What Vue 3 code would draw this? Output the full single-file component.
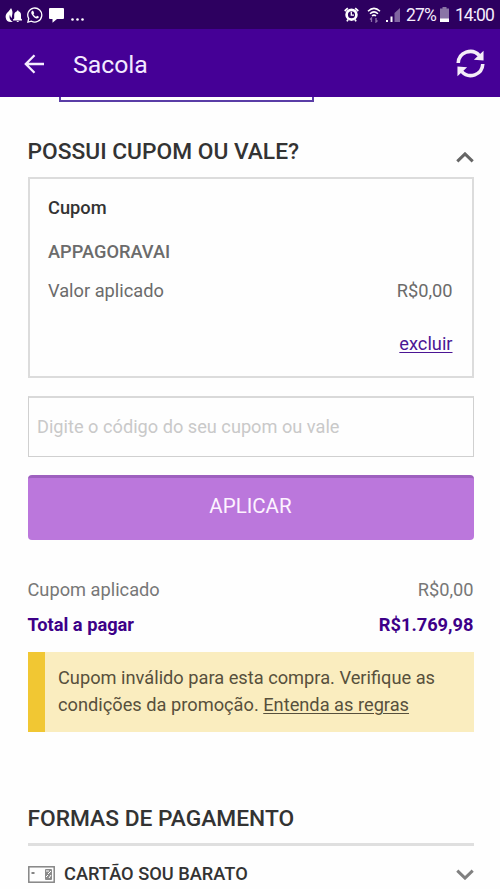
<script setup>
const summary = [
  { label: 'Cupom aplicado', value: 'R$0,00', total: false },
  { label: 'Total a pagar', value: 'R$1.769,98', total: true },
]
</script>

<template>
  <div class="screen">
    <div class="status">
      <svg class="ic-notify" viewBox="0 0 17 16" fill="#fff">
        <path d="M6 1C5 4 0 6 .7 10.500C1 13.500 3 15 6 15H8C4.500 13 4 10 5 7.500C5 9.500 6 10.500 7 11C6.500 8 9 6 6 1Z" />
        <path d="M8 13.500V12.500L9.200 11.500V8C9.200 5.800 10.500 4.700 12 4.300C12 3 13.500 3 13.500 4.300C15 4.700 16 6 16 8V11.500L17 12.500V13.500ZM11.500 14H14C13.700 15.400 11.800 15.400 11.500 14Z" />
      </svg>
      <svg class="ic-whats" viewBox="0 0 16 16">
        <path d="M1.700 11.500A7 7 0 1 1 4.500 14.200L.9 15.100Z" fill="none" stroke="#fff" stroke-width="1.300" />
        <path d="M5 4C4 5 4 6.300 5 7.800C6.200 9.700 7.700 11 9.500 11.500C10.700 11.700 11.800 10.900 11.900 9.800L10.100 8.800L9.200 9.800C7.900 9.300 7 8.400 6.400 7.200L7.200 6.300L6.400 4.200C6 3.800 5.400 3.700 5 4Z" fill="#fff" />
      </svg>
      <svg class="ic-chat" viewBox="0 0 15 15" fill="#fff">
        <path d="M1 0H14Q15 0 15 1V10Q15 11 14 11H8L3.500 14.700V11H1Q0 11 0 10V1Q0 0 1 0Z" />
      </svg>
      <svg class="ic-dots" viewBox="0 0 13 3" fill="#fff"><circle cx="1.500" cy="1.500" r="1.300" /><circle cx="6.500" cy="1.500" r="1.300" /><circle cx="11.500" cy="1.500" r="1.300" /></svg>
      <span class="spacer"></span>
      <svg class="ic-alarm" viewBox="0 0 15 15">
        <path d="M.7 4L3.800 1.200M14.300 4L11.200 1.200M3 14.300L4 12.500M12 14.300L11 12.500" stroke="#fff" stroke-width="1.700" />
        <circle cx="7.500" cy="7.700" r="4.900" fill="none" stroke="#fff" stroke-width="2.700" />
        <path d="M7.300 4.800V8.200H10" fill="none" stroke="#fff" stroke-width="1.300" />
      </svg>
      <svg class="ic-wifi" viewBox="0 0 14 16">
        <g fill="none" stroke="#fff" stroke-width="1.500"><path d="M1 4.200Q7-1.500 13 4.200" /><path d="M3 6.700Q7 3 11 6.700" /><path d="M5 9Q7 7.200 9 9" /></g>
        <path d="M4.500 15V11L3 12.500M9 11V15L10.500 13.500" fill="none" stroke="#8e70aa" stroke-width="1.300" />
      </svg>
      <svg class="ic-signal" viewBox="0 0 14 14">
        <path d="M0 12H2V14H0ZM4.500 8.500H6.500V14H4.500Z" fill="#fff" /><path d="M8.500 5L14 0V14H8.500Z" fill="#8065a0" />
      </svg>
      <span class="pct">27%</span>
      <svg class="ic-battery" viewBox="0 0 9 15"><path d="M2.500 0H6.500V1.500H9V15H0V1.500H2.500Z" fill="#8a75a6" /><path d="M0 11.500H9V15H0Z" fill="#fff" /></svg>
      <span class="clock">14:00</span>
    </div>
    <header class="bar">
      <svg class="back" viewBox="0 0 20 20"><path d="M19.500 10H1.500M10 1.200L1.300 10L10 18.800" fill="none" stroke="#f5ecff" stroke-width="2.300" /></svg>
      <h1>Sacola</h1>
      <svg class="refresh" viewBox="0 0 30 30">
        <g fill="none" stroke="#f4edf8" stroke-width="3.700"><path d="M2.300 14.500A12.500 12.500 0 0 1 24 6.600" /><path d="M27.700 15.500A12.500 12.500 0 0 1 6 23.400" /></g>
        <path d="M28.500 1.700V12L18.500 11ZM1.500 28.300V18L11.500 19Z" fill="#f4edf8" />
      </svg>
    </header>
    <main>
      <div class="cut-button"></div>
      <div class="section-title">
        <h2>POSSUI CUPOM OU VALE?</h2>
        <svg class="chevron" viewBox="0 0 18 11"><path d="M1.300 9.300L9 1.900L16.700 9.300" fill="none" stroke="#666" stroke-width="3" /></svg>
      </div>
      <section class="card">
        <div class="name">Cupom</div>
        <div class="code">APPAGORAVAI</div>
        <div class="row"><span>Valor aplicado</span><span class="amount">R$0,00</span></div>
        <div class="remove"><a>excluir</a></div>
      </section>
      <input class="field" type="text" placeholder="Digite o código do seu cupom ou vale">
      <button class="apply">APLICAR</button>
      <div class="summary">
        <div v-for="s in summary" :key="s.label" class="line" :class="{ total: s.total }">
          <span>{{ s.label }}</span><span class="value">{{ s.value }}</span>
        </div>
      </div>
      <div class="alert"><div>Cupom inválido para esta compra. Verifique as</div><div>condições da promoção. <a>Entenda as regras</a></div></div>
      <h2 class="payment">FORMAS DE PAGAMENTO</h2>
      <div class="method">
        <svg class="ic-card" viewBox="0 0 27 17"><rect x=".8" y=".8" width="25.400" height="15.400" fill="none" stroke="#858585" stroke-width="1.500" /><path d="M3.500 7H6.500" stroke="#666" stroke-width="1.600" /><rect x="17" y="3" width="7" height="11" rx="1" fill="#8b8b8b" /><path d="M18 5H21M20 8L23 5M18 11L20 9M21 12L23 9" stroke="#fff" /></svg>
        <span class="method-name">CARTÃO SOU BARATO</span>
        <svg class="chevron" viewBox="0 0 18 11"><path d="M1.300 1.700L9 9.100L16.700 1.700" fill="none" stroke="#808080" stroke-width="3" /></svg>
      </div>
    </main>
  </div>
</template>

<style>
body { margin: 0; overflow: hidden; background: #fefefe; }
</style>
<style scoped>
* { box-sizing: border-box; }
.screen { width: 500px; height: 889px; overflow: hidden; font-family: Roboto, sans-serif; font-size: 18.24px; color: #6b6b6b; background: #fefefe; white-space: nowrap; }
svg { display: block; flex: none; }
h1, h2 { margin: 0; font-weight: 500; }
.status { height: 29px; background: #2d0060; display: flex; align-items: center; padding: 0 6px 0 5px; color: #f5edfc; font-size: 17.5px; letter-spacing: -.9px; }
.ic-notify { width: 17px; height: 16px; }
.ic-whats { width: 16px; height: 16px; margin-left: 5px; }
.ic-chat { width: 15px; height: 15px; margin: 1px 0 0 6px; }
.ic-dots { width: 13px; height: 3px; margin: 10px 0 0 7px; }
.spacer { flex: 1; }
.ic-alarm { width: 15px; height: 15px; }
.ic-wifi { width: 14px; height: 16px; margin-left: 8px; }
.ic-signal { width: 14px; height: 14px; margin: 1px 6px 0 5px; }
.pct, .clock { padding-top: 1px; }
.ic-battery { width: 9px; height: 15px; margin: 0 6px 0 4px; }
.bar { height: 68px; background: #450096; display: flex; align-items: center; padding: 0 15px 0 24px; }
.back { width: 21px; height: 20px; margin-top: 1px; }
.bar h1 { flex: 1; margin-left: 28px; font-size: 24.8px; font-weight: 400; color: #f3e9ff; line-height: 68px; padding-top: 3px; }
.refresh { width: 29px; height: 29px; }
main { padding: 0 26px 0 28px; }
.cut-button { width: 255px; height: 5px; margin-left: 31px; border: 2px solid #5a3da6; border-top: 0; }
.section-title { height: 75px; display: flex; justify-content: space-between; padding-top: 35px; }
h2 { font-size: 22.75px; line-height: 30px; color: #333; margin-left: -.5px; }
.chevron { width: 18px; height: 11px; }
.section-title .chevron { margin-top: 15px; }
.card { height: 201px; border: 2px solid #dcdcdc; padding: 16px 19.5px 0 18px; line-height: 26px; }
.name { font-weight: 500; color: #333; }
.code { font-weight: 500; margin-top: 18px; }
.row { display: flex; justify-content: space-between; margin-top: 13px; }
.remove { text-align: right; margin-top: 27px; color: #4b1594; }
a { text-decoration: underline; text-underline-offset: 2px; text-decoration-thickness: 1px; }
.field { display: block; width: 446px; height: 61px; margin: 18px 0; padding: 0 8px 2px; border: 1px solid #d0d0d0; border-top: 2px solid #d9d9d9; border-radius: 0; background: transparent; font: 18.2px Roboto, sans-serif; outline: none; }
.field::placeholder { color: #c9c9c9; opacity: 1; }
.apply { display: block; width: 446px; height: 65px; border: 0; border-top: 3px solid #9e60bf; border-radius: 4px; padding: 0 1px 6px 0; background: #bb77dc; color: #fdf3ff; font: 20.5px Roboto, sans-serif; }
.summary { margin: 32px .5px 0 -.5px; }
.line { display: flex; justify-content: space-between; line-height: 35px; color: #777; }
.total { color: #3d0088; font-weight: 700; }
.alert { height: 80px; margin-top: 10px; border-left: 17px solid #f1c733; background: #faedbf; padding: 12px 0 0 13px; line-height: 27px; color: #57503c; }
.payment { height: 114px; padding-top: 72px; margin-left: 0; text-indent: -.5px; border-bottom: 3px solid #dfdfdf; }
.method { display: flex; height: 56px; align-items: center; }
.ic-card { width: 27px; height: 17px; }
.method-name { flex: 1; margin: -2px 0 0 9px; color: #333; font-weight: 500; }
</style>
